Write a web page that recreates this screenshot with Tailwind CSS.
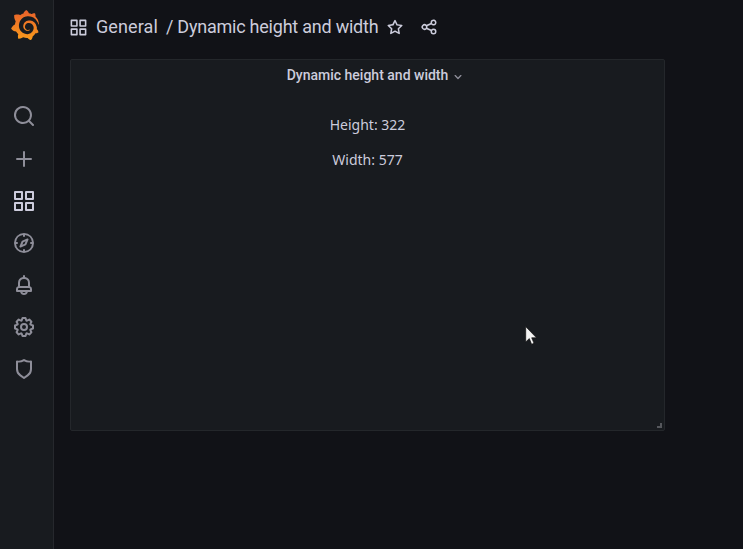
<!DOCTYPE html>
<html lang="en">
<head>
<meta charset="utf-8">
<title>Dynamic height and width</title>
<script src="https://cdn.jsdelivr.net/npm/@tailwindcss/browser@4"></script>
</head>
<body class="relative flex h-screen overflow-hidden bg-[#111217] font-[Roboto,sans-serif] text-[#ccccdc]">
<svg class="hidden"><defs>
<symbol id="apps" viewBox="0 0 24 24"><path d="M10,13H3a1,1,0,0,0-1,1v7a1,1,0,0,0,1,1h7a1,1,0,0,0,1-1V14A1,1,0,0,0,10,13ZM9,20H4V15H9ZM21,2H14a1,1,0,0,0-1,1v7a1,1,0,0,0,1,1h7a1,1,0,0,0,1-1V3A1,1,0,0,0,21,2ZM20,9H15V4h5Zm1,4H14a1,1,0,0,0-1,1v7a1,1,0,0,0,1,1h7a1,1,0,0,0,1-1V14A1,1,0,0,0,21,13Zm-1,7H15V15h5ZM10,2H3A1,1,0,0,0,2,3v7a1,1,0,0,0,1,1h7a1,1,0,0,0,1-1V3A1,1,0,0,0,10,2ZM9,9H4V4H9Z"/></symbol>
</defs></svg>

<nav class="flex w-[54px] shrink-0 flex-col border-r border-[#26282d] bg-[#181b1f] pt-2.5 text-[#8e8e99]">
  <svg class="ml-[9.5px] h-[30px] w-[30px]" viewBox="0 0 24 24"><defs><linearGradient id="lg" x1="0" y1="1" x2="0" y2="0"><stop offset="0" stop-color="#f99b1c"/><stop offset="1" stop-color="#e8602b"/></linearGradient></defs><path fill="url(#lg)" d="M23.02 10.59a8.578 8.578 0 0 0-.862-3.034 8.911 8.911 0 0 0-1.789-2.445c.337-1.342-.413-2.505-.413-2.505-1.292-.08-2.113.4-2.416.62-.052-.02-.102-.044-.154-.064-.22-.089-.446-.172-.677-.247-.231-.073-.47-.14-.711-.197a9.867 9.867 0 0 0-.875-.161C14.557.753 12.94 0 12.94 0c-1.804 1.145-2.147 2.744-2.147 2.744l-.018.093c-.098.029-.2.057-.298.088-.138.042-.275.094-.413.143-.138.055-.275.107-.41.166a8.869 8.869 0 0 0-1.557.87l-.063-.029c-2.497-.955-4.716.195-4.716.195-.203 2.658.996 4.33 1.235 4.636a11.608 11.608 0 0 0-.607 2.635C1.636 12.677.953 15.014.953 15.014c1.926 2.214 4.171 2.351 4.171 2.351.003-.002.006-.002.006-.005.285.509.615.994.986 1.446.156.19.32.371.488.548-.704 2.009.099 3.68.099 3.68 2.144.08 3.553-.937 3.849-1.173a9.784 9.784 0 0 0 3.164.501h.08l.055-.003.107-.002.103-.005.003.002c1.01 1.44 2.788 1.646 2.788 1.646 1.264-1.332 1.337-2.653 1.337-2.94v-.058c0-.02-.003-.039-.003-.06.265-.187.52-.387.758-.6a7.875 7.875 0 0 0 1.415-1.7c1.43.083 2.437-.885 2.437-.885-.236-1.49-1.085-2.216-1.264-2.354l-.018-.013-.016-.013a.217.217 0 0 1-.031-.02c.008-.092.016-.18.02-.27.011-.162.016-.323.016-.48v-.253l-.005-.098-.008-.135a1.891 1.891 0 0 0-.01-.13c-.003-.042-.008-.083-.013-.125l-.016-.124-.018-.122a6.215 6.215 0 0 0-2.032-3.73 6.015 6.015 0 0 0-3.222-1.46 6.292 6.292 0 0 0-.85-.048l-.107.002h-.063l-.044.003-.104.008a4.777 4.777 0 0 0-3.335 1.695c-.332.4-.592.84-.768 1.297a4.594 4.594 0 0 0-.312 1.817l.003.091c.005.055.007.11.013.164a3.615 3.615 0 0 0 .698 1.82 3.53 3.53 0 0 0 1.827 1.282c.33.098.66.14.971.137.039 0 .078 0 .114-.002l.063-.003c.02 0 .041-.003.062-.003.034-.002.065-.007.099-.01.007 0 .018-.003.028-.003l.031-.005.06-.008a1.18 1.18 0 0 0 .112-.02c.036-.008.072-.013.109-.024a2.634 2.634 0 0 0 .914-.415c.028-.02.055-.041.083-.065a.248.248 0 0 0 .039-.35.244.244 0 0 0-.309-.06l-.078.042c-.09.044-.184.083-.283.116a2.476 2.476 0 0 1-.475.096c-.028.003-.054.006-.083.006l-.083.002c-.026 0-.054 0-.08-.002l-.102-.006h-.012l-.024.006c-.016-.003-.031-.003-.044-.006-.031-.002-.06-.007-.091-.01a2.59 2.59 0 0 1-.724-.213 2.557 2.557 0 0 1-.667-.438 2.52 2.52 0 0 1-.805-1.475 2.306 2.306 0 0 1-.029-.444l.006-.122v-.023l.002-.031c.003-.021.003-.04.005-.06a3.163 3.163 0 0 1 1.352-2.29 3.12 3.12 0 0 1 .937-.43 2.946 2.946 0 0 1 .776-.101h.06l.07.002.045.003h.026l.07.005a4.041 4.041 0 0 1 1.635.49 3.94 3.94 0 0 1 1.602 1.662 3.77 3.77 0 0 1 .397 1.414l.005.076.003.075c.002.026.002.05.002.075 0 .024.003.052 0 .07v.065l-.002.073-.008.174a6.195 6.195 0 0 1-.08.639 5.1 5.1 0 0 1-.267.927 5.31 5.31 0 0 1-.624 1.13 5.052 5.052 0 0 1-3.237 2.014 4.82 4.82 0 0 1-.649.066l-.039.003h-.287a6.607 6.607 0 0 1-1.716-.265 6.776 6.776 0 0 1-3.4-2.274 6.75 6.75 0 0 1-.746-1.15 6.616 6.616 0 0 1-.714-2.596l-.005-.083-.002-.02v-.056l-.003-.073v-.096l-.003-.104v-.07l.003-.163c.008-.22.026-.45.054-.678a8.707 8.707 0 0 1 .28-1.355c.128-.444.286-.872.473-1.277a7.04 7.04 0 0 1 1.456-2.1 5.925 5.925 0 0 1 .953-.763c.169-.111.343-.213.524-.306.089-.05.182-.091.273-.135.047-.02.093-.042.138-.062a7.177 7.177 0 0 1 .714-.267l.145-.045c.049-.015.098-.026.148-.041.098-.029.197-.052.296-.076.049-.013.1-.02.15-.033l.15-.032.151-.028.076-.013.075-.01.153-.024c.057-.01.114-.013.171-.023l.169-.021c.036-.003.073-.008.106-.01l.073-.008.036-.003.042-.002c.057-.003.114-.008.171-.01l.086-.006h.023l.037-.003.145-.007a7.999 7.999 0 0 1 1.708.125 7.917 7.917 0 0 1 2.048.68 8.253 8.253 0 0 1 1.672 1.09l.09.077.089.078c.06.052.114.107.171.159.057.052.112.106.166.16.052.055.107.107.159.164a8.671 8.671 0 0 1 1.41 1.978c.012.026.028.052.04.078l.04.078.075.156c.023.051.05.1.07.153l.065.15a8.848 8.848 0 0 1 .45 1.34.19.19 0 0 0 .201.142.186.186 0 0 0 .172-.184c.01-.246.002-.532-.024-.856z"/></svg>
  <div class="mt-16 ml-3 flex flex-col gap-[18px]">
    <svg class="h-6 w-6 fill-current" viewBox="0 0 24 24"><path d="M21.71,20.29,18,16.61A9,9,0,1,0,16.61,18l3.68,3.68a1,1,0,0,0,1.42,0A1,1,0,0,0,21.71,20.29ZM11,18a7,7,0,1,1,7-7A7,7,0,0,1,11,18Z"/></svg>
    <svg class="mt-px h-6 w-6 fill-current" viewBox="0 0 24 24"><path d="M19,11H13V5a1,1,0,0,0-2,0v6H5a1,1,0,0,0,0,2h6v6a1,1,0,0,0,2,0V13h6a1,1,0,0,0,0-2Z"/></svg>
    <svg class="h-6 w-6 fill-[#ccccdc]"><use href="#apps"/></svg>
    <svg class="h-6 w-6 fill-current" viewBox="0 0 24 24"><path d="M12,2A10,10,0,1,0,22,12,10,10,0,0,0,12,2Zm1,17.93V19a1,1,0,0,0-2,0v.93A8,8,0,0,1,4.07,13H5a1,1,0,0,0,0-2H4.07A8,8,0,0,1,11,4.07V5a1,1,0,0,0,2,0V4.07A8,8,0,0,1,19.93,11H19a1,1,0,0,0,0,2h.93A8,8,0,0,1,13,19.93ZM15.14,7.55l-5,2.12a1,1,0,0,0-.52.52l-2.12,5a1,1,0,0,0,.21,1.1,1,1,0,0,0,.7.29.93.93,0,0,0,.4-.09l5-2.12a1,1,0,0,0,.52-.52l2.12-5a1,1,0,0,0-1.31-1.31Zm-2.49,5.1-2.28,1,1-2.28,2.28-1Z"/></svg>
    <svg class="h-6 w-6 fill-current" viewBox="0 0 24 24"><path d="M18,13.18V10a6,6,0,0,0-5-5.91V3a1,1,0,0,0-2,0V4.09A6,6,0,0,0,6,10v3.18A3,3,0,0,0,4,16v2a1,1,0,0,0,1,1H8.14a4,4,0,0,0,7.72,0H19a1,1,0,0,0,1-1V16A3,3,0,0,0,18,13.18ZM8,10a4,4,0,0,1,8,0v3H8Zm4,10a2,2,0,0,1-1.72-1h3.44A2,2,0,0,1,12,20Zm6-3H6V16a1,1,0,0,1,1-1H17a1,1,0,0,1,1,1Z"/></svg>
    <svg class="h-6 w-6 fill-current" viewBox="0 0 24 24"><path d="M21.32,9.55l-1.89-.63.89-1.78A1,1,0,0,0,20.13,6L18,3.87a1,1,0,0,0-1.15-.19l-1.78.89-.63-1.89A1,1,0,0,0,13.5,2h-3a1,1,0,0,0-.95.68L8.92,4.57,7.14,3.68A1,1,0,0,0,6,3.87L3.87,6a1,1,0,0,0-.19,1.15l.89,1.78-1.89.63A1,1,0,0,0,2,10.5v3a1,1,0,0,0,.68.95l1.89.63-.89,1.78A1,1,0,0,0,3.87,18L6,20.13a1,1,0,0,0,1.15.19l1.78-.89.63,1.89a1,1,0,0,0,.95.68h3a1,1,0,0,0,.95-.68l.63-1.89,1.78.89A1,1,0,0,0,18,20.13L20.13,18a1,1,0,0,0,.19-1.15l-.89-1.78,1.89-.63A1,1,0,0,0,22,13.5v-3A1,1,0,0,0,21.32,9.55ZM20,12.78l-1.2.4A2,2,0,0,0,17.64,16l.57,1.14-1.1,1.1L16,17.64a2,2,0,0,0-2.79,1.16l-.4,1.2H11.22l-.4-1.2A2,2,0,0,0,8,17.64l-1.14.57-1.1-1.1L6.36,16A2,2,0,0,0,5.2,13.18L4,12.78V11.22l1.2-.4A2,2,0,0,0,6.36,8L5.79,6.89l1.1-1.1L8,6.36A2,2,0,0,0,10.82,5.2l.4-1.2h1.56l.4,1.2A2,2,0,0,0,16,6.36l1.14-.57,1.1,1.1L17.64,8a2,2,0,0,0,1.16,2.79l1.2.4ZM12,8a4,4,0,1,0,4,4A4,4,0,0,0,12,8Zm0,6a2,2,0,1,1,2-2A2,2,0,0,1,12,14Z"/></svg>
    <svg class="h-6 w-6 fill-current" viewBox="0 0 24 24"><path d="M19.63,3.65a1,1,0,0,0-.84-.2,8,8,0,0,1-6.22-1.27,1,1,0,0,0-1.14,0A8,8,0,0,1,5.21,3.45a1,1,0,0,0-.84.2A1,1,0,0,0,4,4.43v7.45a9,9,0,0,0,3.77,7.33l3.65,2.6a1,1,0,0,0,1.16,0l3.65-2.6A9,9,0,0,0,20,11.88V4.43A1,1,0,0,0,19.63,3.65ZM18,11.88a7,7,0,0,1-2.93,5.7L12,19.77,8.93,17.58A7,7,0,0,1,6,11.88V5.58a10,10,0,0,0,6-1.39,10,10,0,0,0,6,1.39Z"/></svg>
  </div>
</nav>

<main class="flex min-w-0 flex-1 flex-col pl-4">
  <header class="flex h-[54px] items-center text-[18px] leading-6 whitespace-nowrap">
    <svg class="-ml-px h-[19px] w-[19px] fill-current"><use href="#apps"/></svg>
    <span class="ml-2 tracking-[0.1px]">General</span>
    <span class="ml-2 tracking-[-0.23px]">/ Dynamic height and width</span>
    <svg class="ml-2 h-[18px] w-[18px] fill-current" viewBox="0 0 24 24"><path d="M22,9.67A1,1,0,0,0,21.14,9l-5.69-.83L12.9,3a1,1,0,0,0-1.8,0L8.55,8.16,2.86,9a1,1,0,0,0-.81.68,1,1,0,0,0,.25,1l4.13,4-1,5.68A1,1,0,0,0,6.9,21.44L12,18.77l5.1,2.67a.93.93,0,0,0,.46.12,1,1,0,0,0,.59-.19,1,1,0,0,0,.4-1l-1-5.68,4.13-4A1,1,0,0,0,22,9.67Zm-6.15,4a1,1,0,0,0-.29.88l.72,4.2-3.76-2a1.06,1.06,0,0,0-.94,0l-3.76,2,.72-4.2a1,1,0,0,0-.29-.88l-3-3,4.21-.61a1,1,0,0,0,.76-.55L12,5.7l1.88,3.82a1,1,0,0,0,.76.55l4.21.61Z"/></svg>
    <svg class="ml-4 h-[18px] w-[18px] fill-current" viewBox="0 0 24 24"><path d="M18,14a4,4,0,0,0-3.08,1.48l-5.1-2.35a3.64,3.64,0,0,0,0-2.26l5.1-2.35A4,4,0,1,0,14,6a4.17,4.17,0,0,0,.07.71L8.79,9.14a4,4,0,1,0,0,5.72l5.28,2.43A4.17,4.17,0,0,0,14,18a4,4,0,1,0,4-4ZM18,4a2,2,0,1,1-2,2A2,2,0,0,1,18,4ZM6,14a2,2,0,1,1,2-2A2,2,0,0,1,6,14Zm12,6a2,2,0,1,1,2-2A2,2,0,0,1,18,20Z"/></svg>
  </header>
  <section class="relative mt-[5px] flex h-[372px] w-[595px] flex-col items-center rounded-[2px] border border-[#24272b] bg-[#181b1f] text-sm">
    <h2 class="ml-[18px] flex h-[30px] items-center font-medium whitespace-nowrap">Dynamic height and width
      <svg class="mt-[3px] ml-[2px] h-4 w-4 fill-[#8e8e99]" viewBox="0 0 24 24"><path d="M17,9.17a1,1,0,0,0-1.41,0L12,12.71,8.46,9.17a1,1,0,0,0-1.41,0,1,1,0,0,0,0,1.42l4.24,4.24a1,1,0,0,0,1.42,0L17,10.59A1,1,0,0,0,17,9.17Z"/></svg>
    </h2>
    <div class="mt-6 flex flex-col items-center gap-[14px] font-['Noto_Sans',sans-serif] leading-[21px]">
      <p>Height: 322</p>
      <p>Width: 577</p>
    </div>
    <div class="absolute right-[2px] bottom-[2px] h-[5px] w-[5px] border-r-2 border-b-2 border-[#55575c]"></div>
  </section>
</main>
<svg class="absolute top-[326px] left-[525px] h-5 w-3" viewBox="0 0 12 20"><path fill="#f4f4f4" stroke="#111" stroke-width=".7" d="M.7.6V16L4.3 12.6L6.6 18.3L9 17.3L6.7 11.8H11.5Z"/></svg>
</body>
</html>
